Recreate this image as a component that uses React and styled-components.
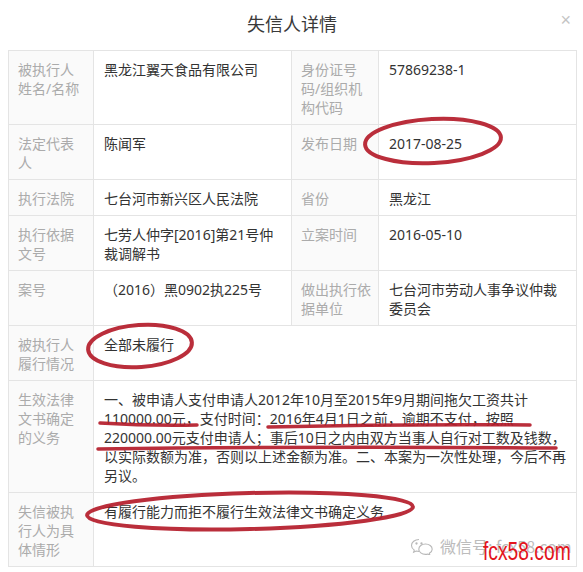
import React from 'react'
import styled, { createGlobalStyle } from 'styled-components'

const GlobalStyle = createGlobalStyle`
  html, body {
    margin: 0;
    background: #fff;
  }
  body {
    font-family: "Noto Sans", "Noto Sans CJK SC", sans-serif;
    color: #333;
  }
`

const rows = [
  [
    { label: '被执行人姓名/名称', value: '黑龙江翼天食品有限公司' },
    { label: '身份证号码/组织机构代码', value: '57869238-1' },
  ],
  [
    { label: '法定代表人', value: '陈闻军' },
    { label: '发布日期', value: '2017-08-25' },
  ],
  [
    { label: '执行法院', value: '七台河市新兴区人民法院' },
    { label: '省份', value: '黑龙江' },
  ],
  [
    { label: '执行依据文号', value: '七劳人仲字[2016]第21号仲裁调解书' },
    { label: '立案时间', value: '2016-05-10' },
  ],
  [
    { label: '案号', value: '（2016）黑0902执225号' },
    { label: '做出执行依据单位', value: '七台河市劳动人事争议仲裁委员会' },
  ],
]

// the duty text keeps the line breaks of the original page
const duty = [
  '一、被申请人支付申请人2012年10月至2015年9月期间拖欠工资共计',
  '110000.00元，支付时间：2016年4月1日之前，逾期不支付，按照',
  '220000.00元支付申请人；事后10日之内由双方当事人自行对工数及钱数，',
  '以实际数额为准，否则以上述金额为准。二、本案为一次性处理，今后不再',
  '另议。',
]

const WeChatIcon = () => (
  <svg width="24" height="17" viewBox="0 0 24 17" fill="none" stroke="#b8b8b8" strokeWidth="1.1">
    <path d="M9 1.5c-4.2 0-7.5 2.7-7.5 6 0 1.9 1.1 3.5 2.8 4.6l-.7 2.2 2.6-1.3c.9.3 1.8.4 2.8.4" />
    <path d="M15.5 6c-3.7 0-6.7 2.3-6.7 5.2s3 5.2 6.7 5.2c.8 0 1.5-.1 2.2-.3l2.2 1.1-.6-1.9c1.7-1 2.9-2.5 2.9-4.1 0-2.9-3-5.2-6.7-5.2z" />
    <circle cx="6.5" cy="5.5" r=".6" fill="#b8b8b8" />
    <circle cx="11.5" cy="5.5" r=".6" fill="#b8b8b8" />
  </svg>
)

const Marks = () => (
  <MarkLayer width="583" height="572" viewBox="0 0 583 572">
    <g fill="none" stroke="#b51d2b" strokeWidth="4" strokeLinecap="round">
      <ellipse cx="433" cy="141" rx="68" ry="22" transform="rotate(-3 433 141)" />
      <ellipse cx="140" cy="346" rx="52" ry="21" transform="rotate(-4 140 346)" />
      <ellipse cx="250" cy="511" rx="163" ry="18" transform="rotate(-1.5 250 511)" />
    </g>
    <g fill="none" stroke="#b51d2b" strokeWidth="3.5" strokeLinecap="round">
      <path d="M100 423 Q150 426 197 425" />
      <path d="M268 427 Q400 424 530 425" />
      <path d="M98 449 Q330 446 556 448" />
    </g>
  </MarkLayer>
)

const App = () => {
  return (
    <>
      <GlobalStyle />
      <Page>
        <Header>
          <Title>失信人详情</Title>
          <Close>×</Close>
        </Header>
        <Table>
          <colgroup>
            <col style={{ width: 85 }} />
            <col style={{ width: 198 }} />
            <col style={{ width: 87 }} />
            <col style={{ width: 198 }} />
          </colgroup>
          <tbody>
            {rows.map((row, i) => (
              <tr key={i}>
                <Label>{row[0].label}</Label>
                <Value>{row[0].value}</Value>
                <Label $tight>{row[1].label}</Label>
                <Value>{row[1].value}</Value>
              </tr>
            ))}
            <tr>
              <Label>被执行人履行情况</Label>
              <Value colSpan={3}>全部未履行</Value>
            </tr>
            <tr>
              <Label>生效法律文书确定的义务</Label>
              <Value colSpan={3}>
                {duty.map((line) => (
                  <Line key={line}>{line}</Line>
                ))}
              </Value>
            </tr>
            <tr>
              <Label>失信被执行人为具体情形</Label>
              <Value colSpan={3}>有履行能力而拒不履行生效法律文书确定义务</Value>
            </tr>
          </tbody>
        </Table>
        <Marks />
        <Watermark>
          <WeChatIcon />
          <WatermarkText>微信号: fcx58.com</WatermarkText>
          <SiteMark>fcx58.com</SiteMark>
        </Watermark>
      </Page>
    </>
  )
}

const Page = styled.div`
  position: relative;
  width: 583px;
  height: 572px;
  padding: 0 7px 0 8px;
  box-sizing: border-box;
  overflow: hidden;
`

const Header = styled.div`
  position: relative;
  height: 50px;
  display: flex;
  align-items: center;
  justify-content: center;
`

const Title = styled.h2`
  margin: 0 0 4px;
  font-family: "Noto Sans CJK SC", sans-serif;
  font-size: 18px;
  font-weight: 400;
  color: #3a3a3a;
`

const Close = styled.span`
  position: absolute;
  right: 5px;
  top: 10px;
  font-family: "Liberation Sans", sans-serif;
  font-size: 18px;
  color: #c4c4c4;
`

const Table = styled.table`
  width: 568px;
  table-layout: fixed;
  border-collapse: collapse;
  font-size: 14px;
  line-height: 19px;
`

const Label = styled.th`
  padding: ${(p) => (p.$tight ? '9px 3px 7px 9px' : '9px 8px 7px 9px')};
  border: 1px solid #e4e4e4;
  background: #fafafa;
  color: #ababab;
  font-weight: 400;
  text-align: left;
  vertical-align: top;
  word-break: break-all;
`

const Value = styled.td`
  padding: 9px 9px 7px 10px;
  border: 1px solid #e4e4e4;
  color: #333;
  vertical-align: top;
  word-break: break-all;
`

const Line = styled.span`
  display: block;
  white-space: nowrap;
`

const MarkLayer = styled.svg`
  position: absolute;
  left: 0;
  top: 0;
  pointer-events: none;
  opacity: 0.92;
`

const Watermark = styled.div`
  position: absolute;
  left: 410px;
  top: 534px;
  display: flex;
  align-items: center;
  gap: 6px;
`

const WatermarkText = styled.span`
  font-family: "Noto Sans CJK SC", sans-serif;
  font-size: 16px;
  color: #bcbcbc;
  white-space: nowrap;
`

const SiteMark = styled.span`
  position: absolute;
  left: 73px;
  top: 4px;
  font-family: "Liberation Sans", sans-serif;
  font-size: 26px;
  line-height: 26px;
  color: #e3141c;
  transform: scaleX(0.74);
  transform-origin: left top;
  white-space: nowrap;
`

export default App
